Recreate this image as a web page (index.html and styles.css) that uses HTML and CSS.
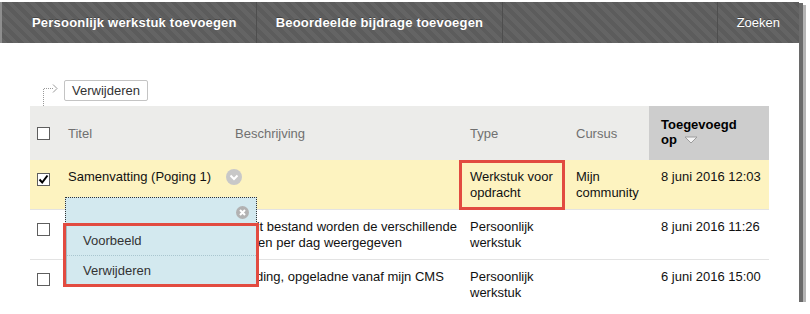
FILE: index.html
```html
<!DOCTYPE html>
<html lang="nl">
<head>
    <meta charset="UTF-8">
    <meta name="viewport" content="width=device-width, initial-scale=1.0">
    <title>Mijn werkstukken</title>
    <link rel="stylesheet" href="styles.css">
</head>
<body>
    <div class="window">
        <nav class="action-bar">
            <a class="action first">Persoonlijk werkstuk toevoegen</a>
            <a class="action">Beoordeelde bijdrage toevoegen</a>
            <span class="spacer"></span>
            <a class="action search">Zoeken</a>
        </nav>

        <div class="toolbar">
            <svg class="connector" width="20" height="24" viewBox="0 0 20 24">
                <path d="M3.5 24 V6.5 H14" fill="none" stroke="#9a9a9a" stroke-dasharray="1 1"/>
                <path d="M13 2.5 L17 6.5 L13 10.5" fill="none" stroke="#9a9a9a"/>
            </svg>
            <button type="button">Verwijderen</button>
        </div>

        <div class="list">
            <table>
                <colgroup>
                    <col style="width:27px">
                    <col style="width:167px">
                    <col style="width:235px">
                    <col style="width:106px">
                    <col style="width:84px">
                    <col style="width:120px">
                </colgroup>
                <thead>
                    <tr>
                        <th class="check"><span class="checkbox"></span></th>
                        <th>Titel</th>
                        <th>Beschrijving</th>
                        <th>Type</th>
                        <th>Cursus</th>
                        <th class="sorted">Toegevoegd <span class="nowrap">op <svg class="sort-arrow" width="14" height="8" viewBox="0 0 14 8"><polygon points="1,1 13,1 7,7" fill="#f4f4f4" stroke="#9c9c9c"/></svg></span></th>
                    </tr>
                </thead>
                <tbody>
                    <tr class="selected">
                        <td class="check">
                            <span class="checkbox checked">
                                <svg width="11" height="11" viewBox="0 0 11 11"><path d="M1.5 5.5 L4.2 8.5 L9.5 1.5" fill="none" stroke="#000" stroke-width="2"/></svg>
                            </span>
                        </td>
                        <td class="title">Samenvatting (Poging 1)<span class="menu-toggle"><svg width="16" height="16" viewBox="0 0 16 16"><circle cx="8" cy="8" r="8" fill="#c8c8c8"/><path d="M4.5 6.5 L8 10 L11.5 6.5" fill="none" stroke="#fff" stroke-width="2"/></svg></span></td>
                        <td></td>
                        <td class="marked">Werkstuk voor opdracht</td>
                        <td>Mijn community</td>
                        <td class="date">8 juni 2016 12:03</td>
                    </tr>
                    <tr>
                        <td class="check"><span class="checkbox"></span></td>
                        <td></td>
                        <td>In dit bestand worden de verschillende lessen per dag weergegeven</td>
                        <td>Persoonlijk werkstuk</td>
                        <td></td>
                        <td class="date">8 juni 2016 11:26</td>
                    </tr>
                    <tr>
                        <td class="check"><span class="checkbox"></span></td>
                        <td></td>
                        <td>Melding, opgeladne vanaf mijn CMS</td>
                        <td>Persoonlijk werkstuk</td>
                        <td></td>
                        <td class="date">6 juni 2016 15:00</td>
                    </tr>
                </tbody>
            </table>

            <div class="context-menu">
                <div class="menu-head">
                    <svg width="13" height="13" viewBox="0 0 13 13"><circle cx="6.5" cy="6.5" r="6.5" fill="#b2b2b2"/><path d="M4 4 L9 9 M9 4 L4 9" stroke="#fff" stroke-width="2"/></svg>
                </div>
                <ul class="menu-items">
                    <li>Voorbeeld</li>
                    <li>Verwijderen</li>
                </ul>
            </div>
        </div>
    </div>
</body>
</html>
```

FILE: styles.css
```css
* {
    box-sizing: border-box;
}

body {
    margin: 0;
    background: #fff;
    font-family: "Liberation Sans", Arial, sans-serif;
    font-size: 13px;
    color: #111;
}

.window {
    width: 799px;
    height: 302px;
    overflow: hidden;
    background: #fff;
    padding-top: 2px;
    box-shadow: 4px 3px 0 #6a6a6a, 7px 5px 0 #b4b4b4;
}

/* top action bar */
.action-bar {
    display: flex;
    height: 41px;
    border-left: 2px solid #8e8e8e;
    background: repeating-linear-gradient(45deg, #646464 0 4px, #5c5c5c 4px 8px);
}

.action {
    display: flex;
    align-items: center;
    padding: 0 19px;
    color: #fff;
    font-weight: bold;
    letter-spacing: 0.2px;
    border-right: 1px solid #4e4e4e;
    text-shadow: 0 -1px 0 rgba(0, 0, 0, 0.3);
}

.action.first {
    padding-left: 30px;
}

.spacer {
    flex: 1;
    border-right: 1px solid #4e4e4e;
}

.action.search {
    font-weight: normal;
    letter-spacing: 0;
    border-right: none;
}

/* toolbar above the list */
.toolbar {
    display: flex;
    align-items: flex-end;
    height: 63px;
    padding: 0 0 5px 40px;
}

.connector {
    margin-bottom: -5px;
}

.toolbar button {
    height: 21px;
    margin-left: 4px;
    padding: 0 7px;
    border: 1px solid #c4c4c4;
    border-radius: 2px;
    background: #fff;
    color: #333;
    font-family: "Liberation Sans", Arial, sans-serif;
    font-size: 13px;
}

/* list */
.list {
    position: relative;
    width: 739px;
    margin-left: 30px;
}

table {
    width: 739px;
    border-collapse: collapse;
    table-layout: fixed;
}

th {
    height: 54px;
    padding: 0 0 0 11px;
    background: #ececea;
    color: #707070;
    font-weight: normal;
    text-align: left;
    vertical-align: middle;
}

th.sorted {
    padding: 11px 0 0 12px;
    background: #cdcdcd;
    color: #000;
    font-weight: bold;
    line-height: 15px;
    vertical-align: top;
}

.nowrap {
    white-space: nowrap;
}

.sort-arrow {
    margin-left: 3px;
}

td {
    padding: 9px 0 8px 11px;
    line-height: 16px;
    vertical-align: top;
    border-bottom: 1px solid #e3e3e3;
}

td.title {
    white-space: nowrap;
}

td.date {
    padding-left: 12px;
}

th.check,
td.check {
    padding-left: 7px;
}

.checkbox {
    display: block;
    width: 13px;
    height: 13px;
    border: 1px solid #5e5e5e;
    background: #fff;
}

td .checkbox {
    margin-top: 4px;
}

.checkbox svg {
    display: block;
}

tr.selected td {
    background: #fdf3c0;
}

.menu-toggle {
    display: inline-block;
    margin-left: 15px;
    vertical-align: -4px;
}

.menu-toggle svg {
    display: block;
}

td.marked {
    outline: 3px solid #e24b40;
    outline-offset: -3px;
}

/* context menu */
.context-menu {
    position: absolute;
    left: 35px;
    top: 91px;
    width: 192px;
    background: #d3e9ef;
    border: 1px dotted #333;
    border-bottom: none;
}

.menu-head {
    display: flex;
    justify-content: flex-end;
    align-items: center;
    height: 28px;
    padding-right: 7px;
}

.menu-items {
    list-style: none;
    margin: 0;
    padding: 0;
    border-left: 1px solid #a3bcc4;
    outline: 3px solid #e24b40;
}

.menu-items li {
    height: 29px;
    line-height: 29px;
    padding-left: 16px;
    color: #333;
}

.menu-items li + li {
    border-top: 1px dotted #a9c6cf;
}
```
